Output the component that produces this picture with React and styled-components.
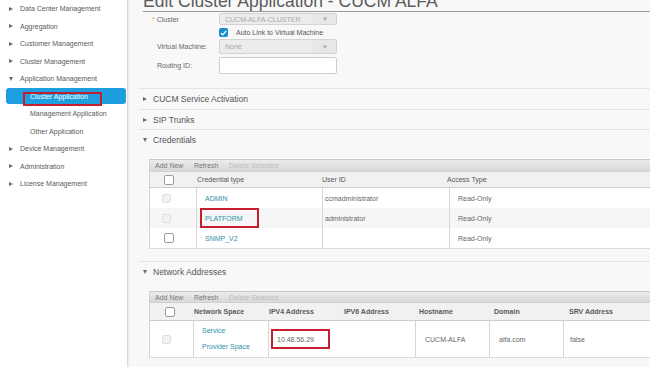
import React from "react";
import styled, { createGlobalStyle } from "styled-components";

const GlobalStyle = createGlobalStyle`
  html, body { margin: 0; padding: 0; }
  body {
    background: #f8f8f8;
    font-family: "Liberation Sans", Arial, Helvetica, sans-serif;
    color: #555;
  }
`;

const Page = styled.div`
  display: flex;
  width: 650px;
  height: 367px;
  overflow: hidden;
  background: #f8f8f8;
`;

/* ---------- Sidebar ---------- */
const Sidebar = styled.nav`
  flex: none;
  width: 127px;
  background: #fff;
  border-right: 1px solid #dadada;
  box-shadow: 1px 0 2px rgba(0, 0, 0, 0.07);
  display: flex;
  flex-direction: column;
  position: relative;
  z-index: 1;
`;

const NavRow = styled.div`
  height: 17.5px;
  display: flex;
  align-items: center;
  gap: 7px;
  padding-left: 8px;
  font-size: 7px;
  color: #5a5a5a;
  white-space: nowrap;
`;

const SubRow = styled.div`
  height: 17.5px;
  display: flex;
  align-items: center;
  padding-left: 30px;
  font-size: 7px;
  color: #5a5a5a;
  white-space: nowrap;
`;

const ActiveRow = styled.div`
  height: 17.5px;
  display: flex;
  align-items: flex-start;
  padding: 0.5px 1px 0 6px;
  box-sizing: border-box;
`;

const ActiveBar = styled.div`
  position: relative;
  flex: 1;
  height: 16px;
  display: flex;
  align-items: center;
  padding-left: 24px;
  background: #1d9fdf;
  border-radius: 3px;
  color: #fff;
  font-size: 7px;
  white-space: nowrap;
`;

const CaretBox = styled.span`
  width: 5px;
  display: flex;
  justify-content: center;
  align-items: center;
  flex: none;
`;

const Caret = styled.span`
  width: 0;
  height: 0;
  ${(p) =>
    p.$open
      ? `border-left: 2.5px solid transparent; border-right: 2.5px solid transparent; border-top: 4px solid #6a6a6a;`
      : `border-top: 2.5px solid transparent; border-bottom: 2.5px solid transparent; border-left: 4px solid #6a6a6a;`}
`;

/* annotation boxes drawn over content */
const Callout = styled.span`
  position: absolute;
  box-sizing: border-box;
  border: 2px solid #c41f2e;
  pointer-events: none;
`;

/* ---------- Main ---------- */
const Main = styled.main`
  flex: 1;
  min-width: 0;
  padding-left: 10px;
  display: flex;
  flex-direction: column;
  overflow: hidden;
`;

const Title = styled.h1`
  margin: -7px 0 0 5px;
  padding-bottom: 1px;
  font-size: 17.5px;
  font-weight: 400;
  line-height: 17px;
  color: #5c5c5c;
  border-bottom: 1px solid #9a9a9a;
  white-space: nowrap;
`;

const FieldRow = styled.div`
  display: flex;
  align-items: center;
  margin-top: ${(p) => p.$gap}px;
  padding-left: ${(p) => p.$indent || 0}px;
`;

const Label = styled.label`
  width: 81px;
  flex: none;
  box-sizing: border-box;
  padding-left: ${(p) => (p.$req ? 14 : 19)}px;
  font-size: 7px;
  color: #666;
  white-space: nowrap;
`;

const Req = styled.span`
  color: #e9a23b;
  margin-right: 2px;
`;

const Select = styled.div`
  width: 118px;
  height: ${(p) => p.$h}px;
  box-sizing: border-box;
  display: flex;
  background: #ececec;
  border: 1px solid #d3d3d3;
  border-radius: 2px;
  color: #a9a9a9;
  font-size: 7px;
`;

const SelectValue = styled.span`
  flex: 1;
  display: flex;
  align-items: center;
  padding-left: 5px;
  white-space: nowrap;
`;

const SelectArrow = styled.span`
  width: 22px;
  display: flex;
  align-items: center;
  justify-content: center;
  border-left: 1px solid #e2e2e2;
  background: #e7e7e7;
  color: #a5a5a5;
  font-size: 6px;
`;

const TextInput = styled.div`
  width: 118px;
  height: 17px;
  box-sizing: border-box;
  background: #fff;
  border: 1px solid #cdcdcd;
  border-radius: 2px;
`;

const BlueCheck = styled.span`
  width: 9px;
  height: 9px;
  border-radius: 2px;
  background: #1a8cd3;
  display: flex;
  align-items: center;
  justify-content: center;
`;

const CheckText = styled.span`
  margin-left: 8px;
  font-size: 7px;
  color: #555;
  white-space: nowrap;
`;

/* ---------- Accordion sections ---------- */
const SectionHead = styled.div`
  box-sizing: border-box;
  height: 20px;
  display: flex;
  align-items: center;
  gap: 6px;
  padding-left: 4px;
  border-top: 1px solid #e4e4e4;
  margin-top: ${(p) => p.$gap || 0}px;
  font-size: 8.5px;
  color: #555;
  white-space: nowrap;
`;

/* ---------- Grid tables ---------- */
const Table = styled.div`
  margin: ${(p) => p.$top}px -20px 0 11px;
  border-left: 1px solid #d2d2d2;
  border-bottom: 1px solid #dcdcdc;
  background: #fff;
`;

const Toolbar = styled.div`
  box-sizing: border-box;
  height: ${(p) => p.$h}px;
  display: flex;
  align-items: center;
  gap: 10.5px;
  padding-left: 5px;
  border-top: 1px solid #c9c9c9;
  background: linear-gradient(#ebebeb, #d9d9d9);
  font-size: 7px;
  color: #777;
  white-space: nowrap;
`;

const ToolItem = styled.span`
  color: ${(p) => (p.$disabled ? "#bdbdbd" : "#777")};
`;

const HeadRow = styled.div`
  box-sizing: border-box;
  display: grid;
  grid-template-columns: ${(p) => p.$cols};
  height: ${(p) => p.$h}px;
  align-items: center;
  background: #f1f1f1;
  border-top: 1px solid #d0d0d0;
  border-bottom: 1px solid #cdcdcd;
  font-size: 7px;
  font-weight: ${(p) => (p.$bold ? 700 : 400)};
  color: ${(p) => (p.$bold ? "#5a5a5a" : "#555")};
  white-space: nowrap;
`;

const HeadCell = styled.div`
  padding-left: ${(p) => p.$pl ?? 1}px;
  display: flex;
  align-items: center;
`;

const DataRow = styled.div`
  box-sizing: border-box;
  display: grid;
  grid-template-columns: ${(p) => p.$cols};
  height: ${(p) => p.$h}px;
  background: ${(p) => (p.$alt ? "#f6f6f6" : "#fff")};
  font-size: 7px;
  color: #666;
  white-space: nowrap;
`;

const Cell = styled.div`
  position: relative;
  display: flex;
  flex-direction: column;
  justify-content: center;
  padding-left: ${(p) => p.$pl ?? 8}px;
  border-left: ${(p) => (p.$first || p.$noBorder ? "none" : "1px solid #d6d6d6")};
  line-height: ${(p) => p.$lh || "normal"};
`;

const LinkText = styled.span`
  color: #2f92a8;
`;

const Box = styled.span`
  box-sizing: border-box;
  width: ${(p) => (p.$faded ? 9 : 10)}px;
  height: ${(p) => (p.$faded ? 9 : 10)}px;
  border-radius: 2px;
  background: ${(p) => (p.$faded ? "#f2f2f2" : "#fff")};
  border: 1px solid ${(p) => (p.$faded ? "#dedede" : "#9c9c9c")};
`;

const navTop = [
  "Data Center Management",
  "Aggregation",
  "Customer Management",
  "Cluster Management",
];
const navBottom = ["Device Management", "Administration", "License Management"];

const credHead = "46px 125px 125px 1fr";
const credCols = "46px 126px 127px 1fr";
const credRows = [
  { type: "ADMIN", user: "ccmadministrator", faded: true },
  { type: "PLATFORM", user: "administrator", faded: true, mark: true },
  { type: "SNMP_V2", user: "", faded: false },
];

const netHead = "43px 75px 75px 75px 75px 75px 1fr";
const netCols = "43px 75px 73px 74px 74px 74px 1fr";

function Check() {
  return (
    <BlueCheck>
      <svg width="7" height="6" viewBox="0 0 7 6">
        <path d="M0.8 3.1 L2.7 4.9 L6.2 1" fill="none" stroke="#fff" strokeWidth="1.3" />
      </svg>
    </BlueCheck>
  );
}

export default function App() {
  return (
    <>
      <GlobalStyle />
      <Page>
        <Sidebar>
          {navTop.map((t) => (
            <NavRow key={t}>
              <CaretBox><Caret /></CaretBox>
              {t}
            </NavRow>
          ))}
          <NavRow>
            <CaretBox><Caret $open /></CaretBox>
            Application Management
          </NavRow>
          <ActiveRow>
            <ActiveBar>
              Cluster Application
              <Callout style={{ left: 17, top: 4, width: 79, height: 14 }} />
            </ActiveBar>
          </ActiveRow>
          <SubRow>Management Application</SubRow>
          <SubRow>Other Application</SubRow>
          {navBottom.map((t) => (
            <NavRow key={t}>
              <CaretBox><Caret /></CaretBox>
              {t}
            </NavRow>
          ))}
        </Sidebar>

        <Main>
          <Title>Edit Cluster Application - CUCM ALFA</Title>

          <FieldRow $gap={1}>
            <Label $req><Req>*</Req>Cluster</Label>
            <Select $h={12}>
              <SelectValue>CUCM-ALFA-CLUSTER</SelectValue>
              <SelectArrow>▼</SelectArrow>
            </Select>
          </FieldRow>
          <FieldRow $gap={3} $indent={81}>
            <Check />
            <CheckText>Auto Link to Virtual Machine</CheckText>
          </FieldRow>
          <FieldRow $gap={2}>
            <Label>Virtual Machine:</Label>
            <Select $h={15}>
              <SelectValue>None</SelectValue>
              <SelectArrow>▼</SelectArrow>
            </Select>
          </FieldRow>
          <FieldRow $gap={3}>
            <Label>Routing ID:</Label>
            <TextInput />
          </FieldRow>

          <SectionHead $gap={14}>
            <CaretBox><Caret /></CaretBox>
            CUCM Service Activation
          </SectionHead>
          <SectionHead $gap={1}>
            <CaretBox><Caret /></CaretBox>
            SIP Trunks
          </SectionHead>
          <SectionHead $gap={0}>
            <CaretBox><Caret $open /></CaretBox>
            Credentials
          </SectionHead>

          <Table $top={10}>
            <Toolbar $h={12}>
              <ToolItem>Add New</ToolItem>
              <ToolItem>Refresh</ToolItem>
              <ToolItem $disabled>Delete Selected</ToolItem>
            </Toolbar>
            <HeadRow $cols={credHead} $h={17}>
              <HeadCell $pl={14}><Box /></HeadCell>
              <HeadCell>Credential type</HeadCell>
              <HeadCell>User ID</HeadCell>
              <HeadCell>Access Type</HeadCell>
            </HeadRow>
            {credRows.map((r, i) => (
              <DataRow key={r.type} $cols={credCols} $h={20} $alt={i === 1}>
                <Cell $first $pl={r.faded ? 12 : 14}>
                  <Box $faded={r.faded} />
                </Cell>
                <Cell $pl={8}>
                  <LinkText>{r.type}</LinkText>
                  {r.mark && <Callout style={{ left: 3, top: 0, width: 59, height: 20 }} />}
                </Cell>
                <Cell $pl={2}>{r.user}</Cell>
                <Cell $pl={8}>Read-Only</Cell>
              </DataRow>
            ))}
          </Table>

          <SectionHead $gap={12}>
            <CaretBox><Caret $open /></CaretBox>
            Network Addresses
          </SectionHead>

          <Table $top={10}>
            <Toolbar $h={11}>
              <ToolItem>Add New</ToolItem>
              <ToolItem>Refresh</ToolItem>
              <ToolItem $disabled>Delete Selected</ToolItem>
            </Toolbar>
            <HeadRow $cols={netHead} $h={19} $bold>
              <HeadCell $pl={15}><Box /></HeadCell>
              <HeadCell>Network Space</HeadCell>
              <HeadCell>IPV4 Address</HeadCell>
              <HeadCell>IPV6 Address</HeadCell>
              <HeadCell>Hostname</HeadCell>
              <HeadCell>Domain</HeadCell>
              <HeadCell>SRV Address</HeadCell>
            </HeadRow>
            <DataRow $cols={netCols} $h={36}>
              <Cell $first $pl={12}>
                <Box $faded />
              </Cell>
              <Cell $pl={8} $lh="16px">
                <LinkText>Service</LinkText>
                <LinkText>Provider Space</LinkText>
              </Cell>
              <Cell $pl={8}>
                10.48.56.29
                <Callout style={{ left: 2, top: 8, width: 59, height: 20 }} />
              </Cell>
              <Cell $noBorder />
              <Cell $pl={9}>CUCM-ALFA</Cell>
              <Cell $pl={9}>alfa.com</Cell>
              <Cell $pl={6}>false</Cell>
            </DataRow>
          </Table>
        </Main>
      </Page>
    </>
  );
}
